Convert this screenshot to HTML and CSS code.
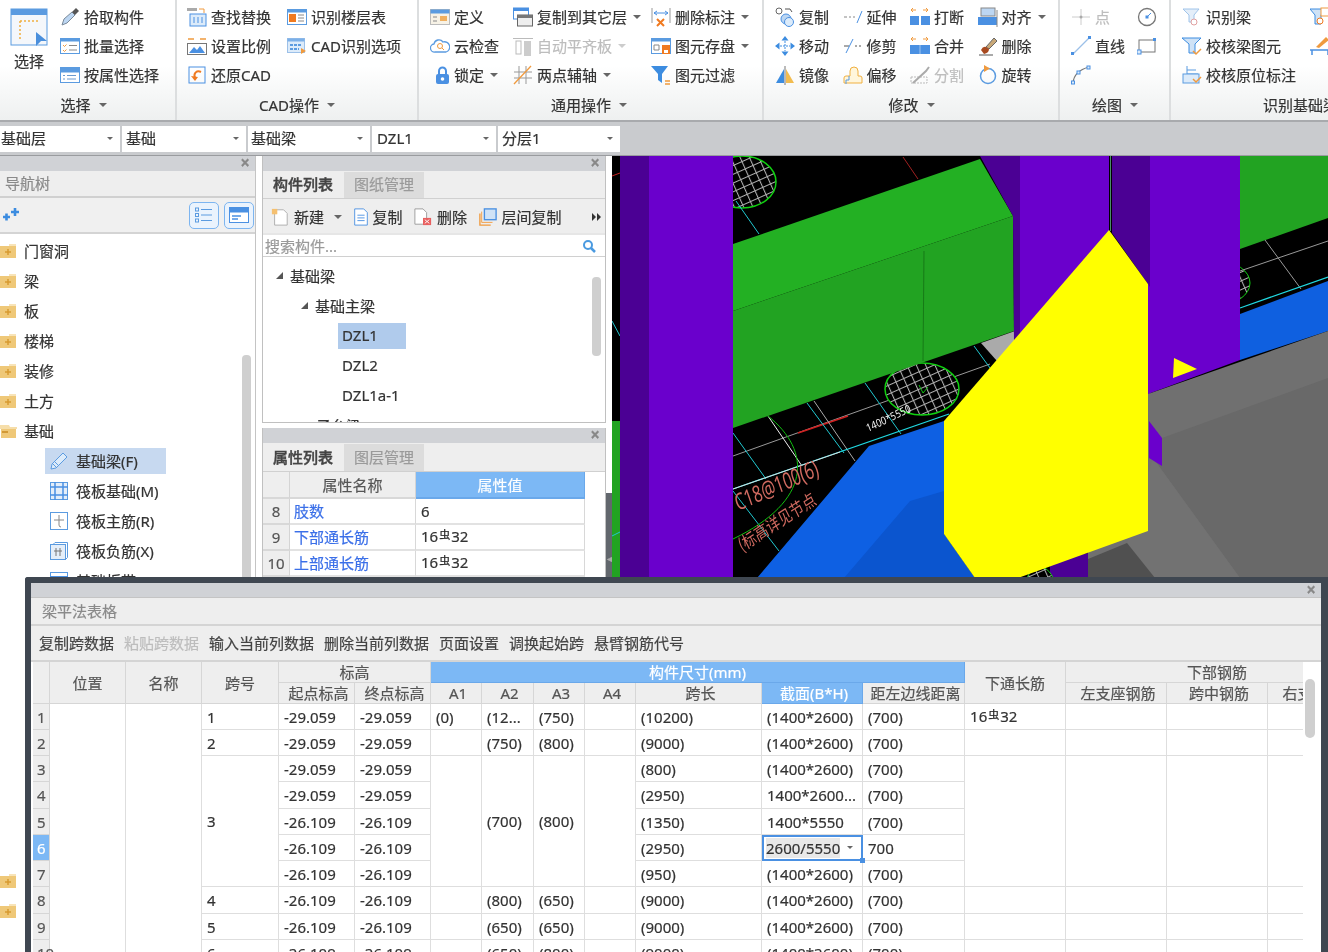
FILE: index.html
```html
<!DOCTYPE html>
<html lang="zh-CN">
<head>
<meta charset="utf-8">
<title>梁平法表格</title>
<link rel="stylesheet" href="styles.css">
</head>
<body>
<div class="app">
  <header class="ribbon">
    <section class="grp g1">
      <div class="grp-body">
        <div class="big">
          <svg width="38" height="38" viewBox="0 0 38 38"><rect x="1" y="1" width="36" height="36" fill="#f4f7fb" stroke="#5b9be0"/><rect x="1" y="1" width="36" height="6" fill="#5b9be0"/><path d="M10 13H30M10 13V33" stroke="#f0b040" stroke-width="1.5" stroke-dasharray="2 2" fill="none"/><path d="M26 24L37 33L31 33L26 38Z" fill="#4a8fdc"/></svg>
          <span>选择</span>
        </div>
        <div class="col">
          <div class="it"><svg class="ico" viewBox="0 0 20 20"><path d="M2 18L4 12L12 5L15 8L7 16Z" fill="#bcd6f2" stroke="#7a8a9a"/><path d="M12 5L16 1L19 4L15 8Z" fill="#555"/></svg>拾取构件</div>
          <div class="it"><svg class="ico" viewBox="0 0 20 20"><rect x=".5" y="2.500" width="19" height="15" fill="#fff" stroke="#5b9be0"/><rect x=".5" y="2.500" width="19" height="3" fill="#5b9be0"/><path d="M3 9l1.500 1.500 2-2M3 14l1.500 1.500 2-2" stroke="#f09a3e" fill="none"/><path d="M9 9.500h8M9 14h8" stroke="#888"/></svg>批量选择</div>
          <div class="it"><svg class="ico" viewBox="0 0 20 20"><rect x=".5" y="2.500" width="19" height="15" fill="#fff" stroke="#5b9be0"/><rect x=".5" y="2.500" width="19" height="5" fill="#5b9be0"/><path d="M3 10.500h2M3 14h2M7 10.500h9M7 14h9" stroke="#6a9ad0"/></svg>按属性选择</div>
        </div>
      </div>
      <div class="grp-label">选择<i class="caret"></i></div>
    </section>

    <section class="grp g2">
      <div class="grp-body">
        <div class="col">
          <div class="it"><svg class="ico" viewBox="0 0 20 20"><rect x="0" y="1" width="10" height="3" fill="#aaa"/><path d="M12 2h5v4" stroke="#f09a3e" fill="none"/><rect x="3" y="7" width="16" height="12" fill="#dcebfa" stroke="#4a90e2"/><path d="M7 10v6M11 10v6M15 10v6" stroke="#4a90e2"/></svg>查找替换</div>
          <div class="it"><svg class="ico" viewBox="0 0 20 20"><path d="M1 3h6M13 3h6" stroke="#f09a3e" stroke-width="1.500"/><rect x=".5" y="7.500" width="19" height="11" fill="#fff" stroke="#777"/><path d="M2 17l5-6 3 3 3-4 5 7Z" fill="#4a90e2"/></svg>设置比例</div>
          <div class="it"><svg class="ico" viewBox="0 0 20 20"><rect x="2" y="2" width="16" height="16" fill="none" stroke="#4a90e2"/><path d="M14 7C10 5 6 8 8 13" stroke="#f07a20" stroke-width="2" fill="none"/><path d="M4 11l4 5 3-4Z" fill="#f07a20"/></svg>还原CAD</div>
        </div>
        <div class="col">
          <div class="it"><svg class="ico" viewBox="0 0 20 20"><rect x=".5" y="2.500" width="19" height="15" fill="#fff" stroke="#5b9be0"/><rect x=".5" y="2.500" width="19" height="3" fill="#5b9be0"/><rect x="2" y="7" width="7" height="8" fill="#f07a20"/><path d="M11 8h6M11 11h6M11 14h6" stroke="#888"/></svg>识别楼层表</div>
          <div class="it"><svg class="ico" viewBox="0 0 20 20"><rect x=".5" y="2.500" width="17" height="14" fill="#dcebfa" stroke="#9cc0e8"/><rect x=".5" y="2.500" width="17" height="3" fill="#7cb0e8"/><path d="M3 9h11M3 13h9" stroke="#5b9be0" stroke-width="2" stroke-dasharray="3 1"/><path d="M14 12l5 3-5 3Z" fill="#f09a3e"/></svg>CAD识别选项</div>
        </div>
      </div>
      <div class="grp-label">CAD操作<i class="caret"></i></div>
    </section>

    <section class="grp g3">
      <div class="grp-body">
        <div class="col">
          <div class="it"><svg class="ico" viewBox="0 0 20 20"><rect x=".5" y="2.500" width="19" height="15" fill="#f7f2e6" stroke="#bbb"/><rect x=".5" y="2.500" width="19" height="4" fill="#5b9be0"/><path d="M3 10h4M3 14h4" stroke="#888"/><rect x="10" y="9" width="7" height="5" fill="#f0b060"/></svg>定义</div>
          <div class="it"><svg class="ico" viewBox="0 0 20 20"><path d="M5 16a4 4 0 0 1-1-8 5 5 0 0 1 9-2 5 5 0 0 1 3 10Z" fill="#fff" stroke="#5b9be0" stroke-width="1.300"/><circle cx="10" cy="10" r="2.500" fill="none" stroke="#f09a3e"/><path d="M12 12l2 2" stroke="#f09a3e"/></svg>云检查</div>
          <div class="it ind5"><svg class="ico sm" viewBox="0 0 15 20"><path d="M4 9V6a3.500 3.500 0 0 1 7 0v3" fill="none" stroke="#4a90e2" stroke-width="2"/><rect x="1" y="9" width="13" height="10" rx="2" fill="#4a90e2"/><circle cx="7.500" cy="14" r="1.800" fill="#fff"/></svg>锁定<i class="caret"></i></div>
        </div>
        <div class="col">
          <div class="it"><svg class="ico" viewBox="0 0 20 20"><rect x=".5" y="1" width="15" height="11" fill="#fff" stroke="#4a90e2"/><rect x=".5" y="1" width="15" height="3" fill="#4a90e2"/><rect x="4.500" y="8" width="15" height="11" fill="#eee" stroke="#666"/><rect x="4.500" y="8" width="15" height="3" fill="#777"/></svg>复制到其它层<i class="caret"></i></div>
          <div class="it off"><svg class="ico" viewBox="0 0 20 20"><path d="M0 2.500h20" stroke="#bbb"/><rect x="3" y="5" width="5" height="13" fill="#fff" stroke="#bbb"/><rect x="11" y="5" width="7" height="15" fill="#ccc"/></svg>自动平齐板<i class="caret lt"></i></div>
          <div class="it"><svg class="ico" viewBox="0 0 20 20"><path d="M1 7h18M1 13h18M6 1v18M13 1v18" stroke="#999"/><path d="M1 19L18 1" stroke="#f09a3e" stroke-width="1.300"/></svg>两点辅轴<i class="caret"></i></div>
        </div>
        <div class="col">
          <div class="it"><svg class="ico" viewBox="0 0 20 20"><path d="M1 1v15M19 1v15" stroke="#999"/><path d="M3 6h14M3 6l3-2M3 6l3 2M17 6l-3-2M17 6l-3 2" stroke="#4a90e2" fill="none"/><path d="M6 12l7 7M13 12l-7 7" stroke="#f07a20" stroke-width="2"/></svg>删除标注<i class="caret"></i></div>
          <div class="it"><svg class="ico" viewBox="0 0 20 20"><rect x=".5" y="2.500" width="19" height="15" fill="#fff" stroke="#5b9be0"/><rect x=".5" y="2.500" width="19" height="3" fill="#5b9be0"/><path d="M3 9h5v5H3Z" fill="none" stroke="#888"/><rect x="11" y="9" width="8" height="9" fill="#f07a20"/><rect x="13" y="14" width="4" height="3" fill="#fff"/></svg>图元存盘<i class="caret"></i></div>
          <div class="it"><svg class="ico" viewBox="0 0 20 20"><path d="M0 1h17L11 9v9L7 15V9Z" fill="#3c8ce0"/><path d="M14 16h5M14 19h5" stroke="#f09a3e" stroke-width="1.500"/></svg>图元过滤</div>
        </div>
      </div>
      <div class="grp-label">通用操作<i class="caret"></i></div>
    </section>

    <section class="grp g4">
      <div class="grp-body">
        <div class="col">
          <div class="it"><svg class="ico" viewBox="0 0 20 20"><circle cx="4" cy="4" r="3" fill="#fff" stroke="#666"/><path d="M10 2h5l2 3" stroke="#555" fill="none"/><circle cx="11" cy="12" r="5" fill="#bcd6f2" stroke="#4a90e2"/><circle cx="14" cy="15" r="4.500" fill="#dcebfa" stroke="#4a90e2"/></svg>复制</div>
          <div class="it"><svg class="ico" viewBox="0 0 20 20"><path d="M10 0L6.500 4.500h7ZM10 20l-3.500-4.500h7ZM0 10l4.500-3.500v7ZM20 10l-4.500-3.500v7Z" fill="#3c8ce0"/><path d="M10 5v10M5 10h10" stroke="#3c8ce0" stroke-dasharray="2 1"/></svg>移动</div>
          <div class="it"><svg class="ico" viewBox="0 0 20 20"><path d="M9 4L1 18h8Z" fill="#3c8ce0"/><path d="M11 4l8 14h-8Z" fill="#f2bc50"/><path d="M10 1v19" stroke="#777"/></svg>镜像</div>
        </div>
        <div class="col">
          <div class="it"><svg class="ico" viewBox="0 0 20 20"><path d="M1 10h3M6 10h2M10 10h2" stroke="#888"/><path d="M14 16L19 4" stroke="#4a90e2"/></svg>延伸</div>
          <div class="it"><svg class="ico" viewBox="0 0 20 20"><path d="M1 10h5M12 10h2M16 10h2" stroke="#555"/><path d="M3 17L10 3" stroke="#4a90e2"/></svg>修剪</div>
          <div class="it"><svg class="ico" viewBox="0 0 20 20"><path d="M1 18V13q0-2 2-2h4V6q0-4 4-4t4 4v5h2q2 0 2 2v5Z" fill="#fff6dc" stroke="#f0b040"/><path d="M3 19V15h3v-4" stroke="#5b9be0" fill="none"/></svg>偏移</div>
        </div>
        <div class="col">
          <div class="it"><svg class="ico" viewBox="0 0 20 20"><path d="M1 3h5M3 1l-2 2 2 2M13 3h5M16 1l2 2-2 2" stroke="#f09a3e" fill="none"/><rect x="0" y="9" width="9" height="9" fill="#4a90e2"/><rect x="11" y="9" width="9" height="9" fill="#4a90e2"/></svg>打断</div>
          <div class="it"><svg class="ico" viewBox="0 0 20 20"><path d="M1 3h5M3 1l-2 2 2 2M13 3h5M16 1l2 2-2 2" stroke="#f09a3e" fill="none"/><rect x="0" y="9" width="20" height="9" fill="#4a90e2"/><path d="M10 9v9" stroke="#9cc4f0"/></svg>合并</div>
          <div class="it off"><svg class="ico" viewBox="0 0 20 20"><path d="M1 12h16v6H1Z" fill="none" stroke="#bbb" stroke-dasharray="2 1"/><path d="M3 18L16 6l3-4" stroke="#aaa" stroke-width="2" fill="none"/></svg>分割</div>
        </div>
        <div class="col">
          <div class="it"><svg class="ico" viewBox="0 0 20 20"><rect x="3" y="1" width="14" height="8" fill="#bcd6f2" stroke="#888"/><rect x="0" y="10" width="19" height="8" fill="#4a90e2"/><path d="M19 3v17" stroke="#888"/></svg>对齐<i class="caret"></i></div>
          <div class="it"><svg class="ico" viewBox="0 0 20 20"><path d="M8 11L16 2l3 3-8 8Z" fill="#c8a878" stroke="#666"/><path d="M3 14q2-4 5-3l3 2q0 4-5 5Z" fill="#a84a20"/><path d="M1 19h14" stroke="#555"/></svg>删除</div>
          <div class="it"><svg class="ico" viewBox="0 0 20 20"><circle cx="10" cy="11" r="7.500" fill="none" stroke="#5b9be0" stroke-width="1.500"/><path d="M6 0l6 3.500L6 7Z" fill="#f09a3e"/></svg>旋转</div>
        </div>
      </div>
      <div class="grp-label">修改<i class="caret"></i></div>
    </section>

    <section class="grp g5">
      <div class="grp-body">
        <div class="col">
          <div class="it off"><svg class="ico" viewBox="0 0 20 20"><path d="M1 10h18M10 2v16" stroke="#ccc"/><circle cx="10" cy="10" r="1.500" fill="#aaa"/></svg>点</div>
          <div class="it"><svg class="ico" viewBox="0 0 20 20"><path d="M2 18L18 2" stroke="#9cc0e8" stroke-width="1.300"/><rect x="0" y="16" width="3" height="3" fill="#4a90e2"/><rect x="17" y="0" width="3" height="3" fill="#4a90e2"/></svg>直线</div>
          <div class="it"><svg class="ico" viewBox="0 0 20 20"><path d="M2 18Q3 6 18 2" stroke="#777" fill="none" stroke-width="1.200"/><rect x=".5" y="16" width="3" height="3" fill="#dcebfa" stroke="#4a90e2"/><rect x="6" y="6" width="3" height="3" fill="#dcebfa" stroke="#4a90e2"/><rect x="16" y="1" width="3" height="3" fill="#dcebfa" stroke="#4a90e2"/></svg></div>
        </div>
        <div class="col">
          <div class="it"><svg class="ico" viewBox="0 0 20 20"><circle cx="10" cy="10" r="8.500" fill="none" stroke="#777" stroke-width="1.300"/><rect x="8.500" y="8.500" width="3" height="3" fill="#4a90e2"/><path d="M10 10l4-4" stroke="#4a90e2"/></svg></div>
          <div class="it"><svg class="ico" viewBox="0 0 20 20"><rect x="2" y="4" width="16" height="12" fill="none" stroke="#777"/><rect x="0" y="14" width="4" height="4" fill="#dcebfa" stroke="#4a90e2"/><rect x="16" y="2" width="3" height="3" fill="#4a90e2"/></svg></div>
        </div>
      </div>
      <div class="grp-label">绘图<i class="caret"></i></div>
    </section>

    <section class="grp g6">
      <div class="grp-body">
        <div class="col">
          <div class="it"><svg class="ico" viewBox="0 0 20 20"><path d="M1 2h16l-5 6v7H7V8Z" fill="#e4eef9" stroke="#a0c4ea"/><circle cx="12" cy="15" r="3" fill="#fff" stroke="#e0a0a0"/></svg>识别梁</div>
          <div class="it"><svg class="ico" viewBox="0 0 20 20"><path d="M0 2h19l-6 6v9H7V8Z" fill="#cfe2f6" stroke="#3c8ce0"/><path d="M11 15l3 3 5-5" stroke="#f09a3e" stroke-width="1.500" fill="none"/></svg>校核梁图元</div>
          <div class="it"><svg class="ico" viewBox="0 0 20 20"><path d="M5 1v8H16M5 5h9" stroke="#5b9be0" fill="none"/><rect x="1" y="9" width="16" height="9" fill="#dcebfa" stroke="#5b9be0"/><path d="M11 14l3 3 5-5" stroke="#f09a3e" stroke-width="1.500" fill="none"/></svg>校核原位标注</div>
        </div>
        <div class="col">
          <div class="it"><svg class="ico" viewBox="0 0 20 20"><path d="M0 2h15l-4 6v9H5V8Z" fill="#cfe2f6" stroke="#3c8ce0"/><rect x="11" y="1" width="8" height="8" fill="#fff" stroke="#f09a3e"/><circle cx="10" cy="14" r="3" fill="#fff" stroke="#f07a20"/></svg></div>
          <div class="it"><svg class="ico" viewBox="0 0 20 20"><path d="M6 11L16 1l3 3-10 8Z" fill="#f09a3e"/><path d="M0 14h20M2 14v5M18 14v5" stroke="#4a90e2" stroke-width="1.500"/></svg></div>
        </div>
      </div>
      <div class="grp-label">识别基础梁<i class="caret"></i></div>
    </section>
  </header>

  <div class="combos">
    <div class="combo">基础层<i class="caret sm"></i></div>
    <div class="combo">基础<i class="caret sm"></i></div>
    <div class="combo">基础梁<i class="caret sm"></i></div>
    <div class="combo">DZL1<i class="caret sm"></i></div>
    <div class="combo">分层1<i class="caret sm"></i></div>
  </div>

  <main class="main">
    <aside class="nav">
      <div class="band"><span class="x">×</span></div>
      <div class="nav-title">导航树</div>
      <div class="nav-tools">
        <svg class="spark" viewBox="0 0 16 14"><path d="M0 9h7M3.500 5.500v7M8 4h8M12 0v8" stroke="#3c8ce0" stroke-width="2.600"/></svg>
        <span class="nav-btn"><svg viewBox="0 0 18 16" width="18" height="16"><rect x=".5" y="1" width="3" height="3" fill="none" stroke="#5b9be0"/><rect x=".5" y="6.500" width="3" height="3" fill="none" stroke="#5b9be0"/><rect x=".5" y="12" width="3" height="3" fill="none" stroke="#5b9be0"/><path d="M6 2.500h11M6 8h11M6 13.500h11" stroke="#5b9be0"/></svg></span>
        <span class="nav-btn"><svg viewBox="0 0 20 16" width="20" height="16"><rect x=".5" y=".5" width="19" height="15" fill="#fff" stroke="#4a90e2"/><rect x=".5" y=".5" width="19" height="5" fill="#4a90e2"/><path d="M3 9h9M3 12h6" stroke="#4a90e2" stroke-width="1.500"/></svg></span>
      </div>
      <div class="nav-list">
        <div class="fold"><svg class="folder" viewBox="0 0 17 16"><path d="M0 3h9V1h7v14H0Z" fill="#efc878"/><path d="M9 1h7v2H9Z" fill="#f8e4b8"/><path d="M8 6v6M5 9h6" stroke="#d89a30" stroke-width="1.500"/></svg>门窗洞</div>
        <div class="fold"><svg class="folder" viewBox="0 0 17 16"><path d="M0 3h9V1h7v14H0Z" fill="#efc878"/><path d="M9 1h7v2H9Z" fill="#f8e4b8"/><path d="M8 6v6M5 9h6" stroke="#d89a30" stroke-width="1.500"/></svg>梁</div>
        <div class="fold"><svg class="folder" viewBox="0 0 17 16"><path d="M0 3h9V1h7v14H0Z" fill="#efc878"/><path d="M9 1h7v2H9Z" fill="#f8e4b8"/><path d="M8 6v6M5 9h6" stroke="#d89a30" stroke-width="1.500"/></svg>板</div>
        <div class="fold"><svg class="folder" viewBox="0 0 17 16"><path d="M0 3h9V1h7v14H0Z" fill="#efc878"/><path d="M9 1h7v2H9Z" fill="#f8e4b8"/><path d="M8 6v6M5 9h6" stroke="#d89a30" stroke-width="1.500"/></svg>楼梯</div>
        <div class="fold"><svg class="folder" viewBox="0 0 17 16"><path d="M0 3h9V1h7v14H0Z" fill="#efc878"/><path d="M9 1h7v2H9Z" fill="#f8e4b8"/><path d="M8 6v6M5 9h6" stroke="#d89a30" stroke-width="1.500"/></svg>装修</div>
        <div class="fold"><svg class="folder" viewBox="0 0 17 16"><path d="M0 3h9V1h7v14H0Z" fill="#efc878"/><path d="M9 1h7v2H9Z" fill="#f8e4b8"/><path d="M8 6v6M5 9h6" stroke="#d89a30" stroke-width="1.500"/></svg>土方</div>
        <div class="fold"><svg class="folder" viewBox="0 0 17 16"><path d="M1 5h15v10H1Z" fill="#efc878"/><path d="M0 2h9l1 2h7v2H0Z" fill="#f6deaa"/><path d="M2 9h6" stroke="#c98a20" stroke-width="1.500"/></svg>基础</div>
        <div class="leaf sel"><svg class="ico" viewBox="0 0 18 18"><path d="M1 17l1-5L13 1l4 4L6 16Z" fill="#dcebfa" stroke="#5b9be0"/><path d="M3 12l3 3M5 10l3 3" stroke="#5b9be0"/></svg>基础梁(F)</div>
        <div class="leaf"><svg class="ico" viewBox="0 0 18 18"><rect x=".5" y=".5" width="17" height="17" fill="#e4eef9" stroke="#5b9be0"/><path d="M0 5h18M0 13h18M5 0v18M13 0v18" stroke="#4a90e2" stroke-width="1.500"/></svg>筏板基础(M)</div>
        <div class="leaf"><svg class="ico" viewBox="0 0 18 18"><rect x=".5" y=".5" width="17" height="17" fill="#fff" stroke="#5b9be0"/><path d="M9 3v10q0 2 2 2M4 8h10" stroke="#888" fill="none"/></svg>筏板主筋(R)</div>
        <div class="leaf"><svg class="ico" viewBox="0 0 18 18"><rect x=".5" y="2.500" width="15" height="15" fill="#e4eef9" stroke="#5b9be0"/><path d="M3 2.500L5 .5h12.500v15L15.500 17.500" fill="none" stroke="#5b9be0"/><path d="M4 9h8M6 6v8M10 6v8" stroke="#777"/></svg>筏板负筋(X)</div>
        <div class="leaf"><svg class="ico" viewBox="0 0 18 18"><rect x=".5" y=".5" width="17" height="17" fill="#fff" stroke="#5b9be0"/><path d="M0 5h18" stroke="#4a90e2" stroke-width="2"/></svg>基础板带(W)</div>
        <div class="nav-gap"></div>
        <div class="fold"><svg class="folder" viewBox="0 0 17 16"><path d="M0 3h9V1h7v14H0Z" fill="#efc878"/><path d="M9 1h7v2H9Z" fill="#f8e4b8"/><path d="M8 6v6M5 9h6" stroke="#d89a30" stroke-width="1.500"/></svg></div>
        <div class="fold"><svg class="folder" viewBox="0 0 17 16"><path d="M0 3h9V1h7v14H0Z" fill="#efc878"/><path d="M9 1h7v2H9Z" fill="#f8e4b8"/><path d="M8 6v6M5 9h6" stroke="#d89a30" stroke-width="1.500"/></svg></div>
        <div class="nav-scroll"></div>
      </div>
    </aside>

    <div class="mid">
      <section class="panel p-comp">
        <div class="band"><span class="x">×</span></div>
        <div class="tabs"><span class="tab on">构件列表</span><span class="tab">图纸管理</span></div>
        <div class="tools">
          <span class="tool"><svg class="ico" viewBox="0 0 20 20"><path d="M4 2h10l4 4v13H4Z" fill="#fff" stroke="#aaa"/><rect x="1" y="1" width="6" height="6" fill="#f5c070"/></svg>新建<i class="caret"></i></span>
          <span class="tool"><svg class="ico sm2" viewBox="0 0 16 20"><path d="M1 1h10l4 4v14H1Z" fill="#fff" stroke="#4a90e2"/><path d="M4 8h8M4 11h8M4 14h8" stroke="#4a90e2"/></svg>复制</span>
          <span class="tool"><svg class="ico" viewBox="0 0 20 20"><path d="M1 1h9l4 4v13H1Z" fill="#fff" stroke="#999"/><rect x="10" y="11" width="9" height="8" fill="#e86060"/><path d="M12 13l5 4M17 13l-5 4" stroke="#fff"/></svg>删除</span>
          <span class="tool"><svg class="ico" viewBox="0 0 20 20"><path d="M1 6v13h12" fill="none" stroke="#f09a3e" stroke-width="1.500"/><path d="M3 4v12h12" fill="none" stroke="#f09a3e"/><rect x="6" y="1" width="13" height="12" fill="#cfe2f6" stroke="#4a90e2" stroke-width="1.500"/></svg>层间复制</span>
          <svg class="more" width="9" height="8" viewBox="0 0 9 8"><path d="M0 0l4 4-4 4ZM5 0l4 4-4 4Z" fill="#333"/></svg>
        </div>
        <div class="search"><span>搜索构件...</span><svg width="14" height="14" viewBox="0 0 14 14"><circle cx="6" cy="6" r="4" fill="none" stroke="#4a9ae0" stroke-width="2"/><path d="M9 9l4 4" stroke="#4a9ae0" stroke-width="2.500"/></svg></div>
        <div class="tree">
          <div class="node n1"><i class="tri"></i>基础梁</div>
          <div class="node n2"><i class="tri"></i>基础主梁</div>
          <div class="node n3 on">DZL1</div>
          <div class="node n3">DZL2</div>
          <div class="node n3">DZL1a-1</div>
          <div class="node n2b">子台梁</div>
          <div class="tree-scroll"></div>
        </div>
      </section>
      <section class="panel p-attr">
        <div class="band"><span class="x">×</span></div>
        <div class="tabs"><span class="tab on">属性列表</span><span class="tab">图层管理</span></div>
        <table class="attr">
          <colgroup><col class="a0"><col class="a1"><col class="a2"></colgroup>
          <thead><tr><th></th><th>属性名称</th><th class="act">属性值</th></tr></thead>
          <tbody>
            <tr><th>8</th><td class="lnk">肢数</td><td>6</td></tr>
            <tr><th>9</th><td class="lnk">下部通长筋</td><td>16<span class="bar">虫</span>32</td></tr>
            <tr><th>10</th><td class="lnk">上部通长筋</td><td>16<span class="bar">虫</span>32</td></tr>
          </tbody>
        </table>
      </section>
    </div>

    <div class="split"><div class="grip">◂</div></div>

    <div class="canvas">
      <svg class="scene" viewBox="612 155 716 422" width="716" height="422">
        <defs>
          <pattern id="hatch" width="8.500" height="8" patternUnits="userSpaceOnUse" patternTransform="rotate(-24)">
            <rect width="8.500" height="8" fill="#000"/>
            <path d="M0 .5H8.500M.5 0V8" stroke="#b0b0b0" stroke-width="1.100"/>
          </pattern>
        </defs>
        <rect x="612" y="155" width="716" height="422" fill="#000"/>
        <path d="M612 175L620 172" stroke="#c82020"/>
        <path d="M612 320L620 335" stroke="#20c8d0"/>
        <path d="M612 420H620V577H612Z" fill="#22a322"/>
        <path d="M612 535L620 531" stroke="#20c8d0"/>
        <ellipse cx="742" cy="181" rx="34" ry="26" fill="url(#hatch)" stroke="#10d010" stroke-width="1.500"/>
        <path d="M736 200L759 233" stroke="#20c8d0"/>
        <path d="M903 156L918 178" stroke="#a02020"/>
        <path d="M733 455L990 363" stroke="#999"/>
        <path d="M798 432L848 415" stroke="#d02020" stroke-width="1.500"/>
        <path d="M814 400L855 460" stroke="#aaa"/>
        <path d="M768 415L802 465" stroke="#eee"/>
        <path d="M807 402L844 452M733 432L766 478M865 382L901 433M974 345L990 367M733 490L779 550" stroke="#20c8d0"/>
        <path d="M733 488L949 413" stroke="#20d8e0" stroke-width="1.300"/>
        <path d="M733 488L840 451" stroke="#ddd" stroke-width="1"/>
        <path d="M768 415C812 450 812 500 733 538" stroke="#10c010" fill="none"/>
        <ellipse cx="922" cy="388" rx="37" ry="26" fill="url(#hatch)" stroke="#10d010" stroke-width="1.500"/>
        <path d="M919 384L923 392L928 386" stroke="#10c010" fill="none"/>
        <text class="red" transform="matrix(.82 -.36 .42 1.200 738 510)">C18@100(6)</text>
        <text class="red2" transform="matrix(.85 -.55 .55 1.100 742 551)">(标高详见节点</text>
        <text class="wht" transform="matrix(.85 -.4 .4 1 868 431)">1400*5550</text>
        <path d="M733 243L980 158L1013 215L733 310Z" fill="#23b023"/>
        <path d="M733 310L1013 215L1014 330L733 427Z" fill="#22a322"/>
        <path d="M924 250L923 360" stroke="#177a17"/>
        <path d="M981 342L1015 330L1020 336L997 360Z" fill="#aaa"/>
        <path d="M620 155H649V577H620Z" fill="#4b0094"/>
        <path d="M649 155H733V577H649Z" fill="#6a00cc"/>
        <ellipse cx="1218" cy="282" rx="32" ry="22" fill="url(#hatch)" stroke="#10d010"/>
        <path d="M980 155H1020V340H1014L1013 215Z" fill="#4b0094"/>
        <path d="M1020 155H1109V232L1020 336Z" fill="#6a00cc"/>
        <path d="M1110.500 155V230" stroke="#4a8a6a"/>
        <path d="M1112 155H1150V393H1148V283L1112 232Z" fill="#4b0094"/>
        <path d="M1150 155H1240V359L1148 393V283L1150 286Z" fill="#6a00cc"/>
        <path d="M1240 155H1328V217L1240 248Z" fill="#22a322"/>
        <path d="M1240 270L1328 240M1265 239L1301 288" stroke="#999"/>
        <path d="M1240 307L1328 276" stroke="#20d8e0" stroke-width="1.300"/>
        <path d="M1240 313L1328 280V330L1240 359Z" fill="#0f60e0"/>
        <path d="M1148 393L1328 330V577H1088V520L1148 530Z" fill="#707070"/>
        <path d="M1162 437L1328 377V577H1240L1153 457Z" fill="#696969"/>
        <path d="M1153 457L1240 577H1155L1127 542Z" fill="#727272"/>
        <path d="M1088 558L1127 542L1155 577H1088Z" fill="#505050"/>
        <path d="M1149 420L1162 437V465L1149 457Z" fill="#6a00cc"/>
        <path d="M1050 560L1088 552V577H1050Z" fill="#4b0094"/>
        <ellipse cx="1040" cy="592" rx="16" ry="26" fill="url(#hatch)" stroke="#10d010"/>
        <path d="M869 445L944 420V533L975 577H757Z" fill="#0e60e3"/>
        <path d="M910 500L944 490V533L975 577H844Z" fill="#0b55cf"/>
        <path d="M1109 229L1148 283V530L1018 577H975L944 533V420Z" fill="#ff0"/>
        <path d="M1174 357L1197 368L1173 377Z" fill="#ff0"/>
      </svg>
    </div>
  </main>

  <section class="dialog">
    <div class="band dlg-band"><span class="x">×</span></div>
    <div class="dlg-title">梁平法表格</div>
    <div class="dlg-tools">
      <span>复制跨数据</span><span class="off">粘贴跨数据</span><span>输入当前列数据</span><span>删除当前列数据</span><span>页面设置</span><span>调换起始跨</span><span>悬臂钢筋代号</span>
    </div>
    <div class="gridwrap">
      <div class="gridclip">
        <table class="grid">
          <colgroup>
            <col class="c17"><col class="c76"><col class="c76"><col class="c77"><col class="c76"><col class="c76">
            <col class="c51"><col class="c52"><col class="c51"><col class="c51"><col class="c126"><col class="c101"><col class="c102">
            <col class="c101"><col class="c101"><col class="c101"><col class="c101">
          </colgroup>
          <thead>
            <tr>
              <th rowspan="2"></th><th rowspan="2">位置</th><th rowspan="2">名称</th><th rowspan="2">跨号</th>
              <th colspan="2">标高</th><th colspan="7" class="act">构件尺寸(mm)</th>
              <th rowspan="2">下通长筋</th><th colspan="3">下部钢筋</th>
            </tr>
            <tr class="sub">
              <th>起点标高</th><th>终点标高</th><th>A1</th><th>A2</th><th>A3</th><th>A4</th><th>跨长</th><th class="act">截面(B*H)</th><th>距左边线距离</th>
              <th>左支座钢筋</th><th>跨中钢筋</th><th>右支座钢筋</th>
            </tr>
          </thead>
          <tbody>
            <tr class="h26"><th>1</th><td rowspan="10"></td><td rowspan="10"></td><td>1</td><td>-29.059</td><td>-29.059</td><td>(0)</td><td>(12...</td><td>(750)</td><td></td><td>(10200)</td><td>(1400*2600)</td><td>(700)</td><td>16<span class="bar">虫</span>32</td><td></td><td></td><td></td></tr>
            <tr class="h26"><th>2</th><td>2</td><td>-29.059</td><td>-29.059</td><td></td><td>(750)</td><td>(800)</td><td></td><td>(9000)</td><td>(1400*2600)</td><td>(700)</td><td></td><td></td><td></td><td></td></tr>
            <tr class="h26"><th>3</th><td rowspan="5">3</td><td>-29.059</td><td>-29.059</td><td rowspan="5"></td><td rowspan="5">(700)</td><td rowspan="5">(800)</td><td rowspan="5"></td><td>(800)</td><td>(1400*2600)</td><td>(700)</td><td rowspan="5"></td><td rowspan="5"></td><td rowspan="5"></td><td rowspan="5"></td></tr>
            <tr class="h27"><th>4</th><td>-29.059</td><td>-29.059</td><td>(2950)</td><td>1400*2600...</td><td>(700)</td></tr>
            <tr class="h26"><th>5</th><td>-26.109</td><td>-26.109</td><td>(1350)</td><td>1400*5550</td><td>(700)</td></tr>
            <tr class="h26"><th class="act">6</th><td>-26.109</td><td>-26.109</td><td>(2950)</td><td class="edit"><span class="val">2600/5550</span><i class="caret sm"></i><i class="handle"></i></td><td class="plain">700</td></tr>
            <tr class="h26"><th>7</th><td>-26.109</td><td>-26.109</td><td>(950)</td><td>(1400*2600)</td><td>(700)</td></tr>
            <tr class="h27"><th>8</th><td>4</td><td>-26.109</td><td>-26.109</td><td></td><td>(800)</td><td>(650)</td><td></td><td>(9000)</td><td>(1400*2600)</td><td>(700)</td><td></td><td></td><td></td><td></td></tr>
            <tr class="h26"><th>9</th><td>5</td><td>-26.109</td><td>-26.109</td><td></td><td>(650)</td><td>(650)</td><td></td><td>(9000)</td><td>(1400*2600)</td><td>(700)</td><td></td><td></td><td></td><td></td></tr>
            <tr class="h26"><th>10</th><td>6</td><td>-26.109</td><td>-26.109</td><td></td><td>(650)</td><td>(800)</td><td></td><td>(9000)</td><td>(1400*2600)</td><td>(700)</td><td></td><td></td><td></td><td></td></tr>
          </tbody>
        </table>
      </div>
      <div class="grid-scroll"></div>
    </div>
  </section>
</div>
</body>
</html>
```

FILE: styles.css
```css
* { box-sizing: border-box; }
html, body { margin: 0; height: 100%; overflow: hidden; background: #fff; }
.app {
  position: relative;
  width: 1328px;
  height: 952px;
  overflow: hidden;
  font: 15px/20px "Noto Sans", "Noto Sans CJK SC", sans-serif;
  color: #333;
  -webkit-text-stroke: .2px;
  filter: blur(0.4px);
}

/* ribbon */
.ribbon {
  display: flex;
  height: 122px;
  overflow: hidden;
  background: linear-gradient(#fff 0, #fff 55%, #eef0f0 100%);
  border-bottom: 2px solid #a8aaad;
}
.grp {
  flex: none;
  height: 120px;
  display: flex;
  flex-direction: column;
  padding-top: 2px;
  border-right: 2px solid #dcdedf;
  padding-left: 11px;
}
.g1 { width: 177px; padding-left: 10px; }
.g2 { width: 242px; padding-left: 10px; }
.g3 { width: 345px; }
.g4 { width: 296px; }
.g5 { width: 111px; }
.g6 { width: 274px; border-right: 0; }
.grp-body { height: 88px; display: flex; }
.grp-label { height: 29px; display: flex; align-items: center; justify-content: center; gap: 8px; white-space: nowrap; padding-right: 10px; }
.g1 .grp-label { padding-right: 18px; }
.g3 .grp-label { padding-right: 14px; }
.col { flex: none; display: flex; flex-direction: column; }
.g1 .big { width: 38px; margin-right: 12px; display: flex; flex-direction: column; align-items: center; padding-top: 6px; }
.big svg { margin-bottom: 5px; }
.g2 .col:nth-child(1) { width: 100px; }
.g3 .col:nth-child(1) { width: 83px; }
.g3 .col:nth-child(2) { width: 138px; }
.g4 .col { width: 67.500px; }
.g5 .col { width: 66px; }
.g6 .col:nth-child(1) { width: 128px; }
.it { height: 29px; display: flex; align-items: center; gap: 4px; white-space: nowrap; }
.it.off { color: #bdbdbd; }
.ind5 { padding-left: 5px; }
.ico { flex: none; width: 20px; height: 20px; }
.ico.sm { width: 15px; }
.caret {
  display: inline-block;
  width: 0; height: 0;
  border-left: 4.500px solid transparent;
  border-right: 4.500px solid transparent;
  border-top: 4.500px solid #666;
  margin-left: 2px;
  flex: none;
}
.grp-label .caret { margin-left: 0; }
.caret.lt { border-top-color: #ccc; }
.caret.sm { border-left-width: 3.500px; border-right-width: 3.500px; border-top-width: 3.500px; }

/* combo bar */
.combos { height: 33px; display: flex; gap: 2px; padding: 4px 0 3px; background: #c9cbce; }
.combo { position: relative; width: 122px; height: 26px; background: #fff; padding: 2px 0 0 4px; line-height: 20px; }
.combo:nth-child(1) { width: 120px; padding-left: 1px; }
.combo:nth-child(2), .combo:nth-child(4) { width: 124px; }
.combo:nth-child(3) { padding-left: 3px; }
.combo:nth-child(4) { padding-left: 5px; }
.combo .caret { position: absolute; right: 7px; top: 11px; margin: 0; }

/* main row */
.main { display: flex; height: 797px; background: #fff; border-top: 1px solid #9a9c9f; }
.band { height: 15px; background: #d0d2d6; text-align: right; position: relative; }
.x { position: absolute; right: 5px; top: -3px; font-size: 17px; line-height: 20px; color: #888; font-weight: 700; }

.nav { flex: none; width: 256px; border-right: 1px solid #c4c4c4; }
.nav-title { height: 27px; background: #eeeeee; border-bottom: 2px solid #d0d0d0; color: #8a8a8a; padding: 2px 0 0 5px; }
.nav-tools { height: 36px; background: #f0f0f0; border-bottom: 2px solid #d4d4d4; display: flex; align-items: center; gap: 5px; padding-right: 1px; }
.spark { width: 16px; height: 14px; margin: 0 auto 0 3px; }
.nav-btn { width: 30px; height: 27px; border: 1.500px solid #7db5f0; border-radius: 5px; background: #eaf3fd; display: flex; align-items: center; justify-content: center; }
.nav-list { position: relative; padding-top: 2px; }
.fold { height: 30px; display: flex; align-items: center; gap: 7px; }
.folder { flex: none; width: 17px; height: 16px; }
.leaf { height: 30px; display: flex; align-items: center; gap: 8px; margin-left: 45px; width: 121px; padding-left: 5px; white-space: nowrap; border-top: 2px solid #fff; border-bottom: 2px solid #fff; }
.leaf .ico { width: 18px; height: 18px; }
.leaf.sel { background: #c7d9f0; }
.nav-gap { height: 270px; }
.nav-scroll { position: absolute; left: 242px; top: 121px; width: 9px; height: 300px; border-radius: 4px; background: #cfcfcf; }

.mid { flex: none; width: 344px; margin-left: 6px; display: flex; flex-direction: column; gap: 5px; }
.panel { border: 1px solid #c0c0c0; border-top: 0; background: #fff; overflow: hidden; }
.p-comp { height: 267px; position: relative; }
.p-attr { flex: 1; }
.tabs { height: 28px; background: #eeeeee; border-bottom: 1px solid #d0d0d0; display: flex; gap: 1px; padding-top: 1px; }
.p-attr .tabs { height: 29px; }
.tab { width: 80px; text-align: center; background: #dcdcdc; color: #9a9a9a; line-height: 24px; }
.p-attr .tab { line-height: 26px; }
.tab.on { background: #eeeeee; color: #444; font-weight: 500; -webkit-text-stroke: .4px #444; }
.tools { height: 34px; background: #eeeeee; display: flex; align-items: center; padding: 1px 0 0 7px; white-space: nowrap; }
.tool { display: flex; align-items: center; gap: 4px; margin-right: 10.500px; }
.tool .ico { width: 20px; height: 18px; }
.tool .caret { margin-left: 6px; }
.tool .ico.sm2 { width: 16px; }
.more { margin-left: auto; margin-right: 4px; }
.search { height: 24px; border-top: 2px solid #e6e6e6; border-bottom: 1px solid #d0d0d0; display: flex; align-items: center; justify-content: space-between; padding: 0 9px 0 2px; color: #9a9a9a; }
.tree { position: relative; height: 166px; overflow: hidden; }
.node { height: 30px; line-height: 30px; white-space: nowrap; display: flex; align-items: center; }
.n1 { padding-left: 28px; margin-top: 3.500px; }
.n2 { padding-left: 53px; }
.n3 { margin-left: 75px; width: 68px; padding: 0 0 2px 4px; line-height: 24px; border-top: 2px solid #fff; border-bottom: 2px solid #fff; }
.n3.on { background: #b0cbec; }
.n2b { padding-left: 53px; }
.tri { width: 0; height: 0; border-left: 7px solid transparent; border-bottom: 7px solid #555; margin: 0 7px 0 -15px; }
.tree-scroll { position: absolute; left: 329px; top: 20px; width: 9px; height: 79px; border-radius: 4px; background: #cfcfcf; }

.attr { border-spacing: 0; table-layout: fixed; width: 322px; font: inherit; }
.a0 { width: 27px; } .a1 { width: 126px; } .a2 { width: 169px; }
.attr th { background: #eeeeee; font-weight: 400; color: #555; border-right: 1px solid #d4d4d4; border-bottom: 2px solid #d8d8d8; height: 26px; padding: 0; text-align: center; }
.attr thead th { height: 27px; }
.attr th.act { background: #7cb8f5; color: #fff; border-color: #6aa8ea; }
.attr td { height: 26px; padding: 0 5px; border-right: 1px solid #d8d8d8; border-bottom: 2px solid #e2e2e2; white-space: nowrap; overflow: hidden; }
.attr .lnk { color: #3a6fe8; padding-left: 4px; }
.bar { font-size: 11px; position: relative; top: -3px; margin: 0 1px; color: #222; }

.split { flex: none; width: 6px; background: #fff; display: flex; flex-direction: column; padding-top: 337px; }
.grip { height: 90px; background: #62676d; color: #aaa; font-size: 10px; line-height: 30px; padding-top: 50px; text-align: center; }
.canvas { flex: none; width: 716px; height: 422px; background: #000; }
.scene { display: block; -webkit-text-stroke: 0; }
.red { font: 18px "Liberation Sans Narrow", "Noto Sans", sans-serif; fill: #d06a60; }
.red2 { font: 14px "Noto Sans CJK SC", sans-serif; fill: #d06a60; }
.wht { font: 10px "Noto Sans", sans-serif; fill: #eee; }

/* dialog */
.dialog {
  position: absolute;
  left: 25px; top: 577px; right: 0; bottom: 0;
  border: solid #3f4751;
  border-width: 6px 7px 0 6px;
  border-top-left-radius: 3px;
  background: #eeeeee;
  display: flex;
  flex-direction: column;
}
.dlg-band { flex: none; border-bottom: 1px solid #c4c4c4; }
.dlg-title { flex: none; height: 28px; border-bottom: 2px solid #d4d4d4; color: #8a8a8a; padding: 3px 0 0 11px; }
.dlg-tools { flex: none; height: 36px; display: flex; gap: 10px; align-items: center; padding-left: 8px; color: #444; border-bottom: 2px solid #d4d4d4; white-space: nowrap; }
.dlg-tools .off { color: #bdbdbd; }
.gridwrap { position: relative; flex: 1; background: #fff; padding-left: 2px; overflow: hidden; }
.gridclip { width: 1270px; height: 100%; overflow: hidden; }
.grid { border-spacing: 0; table-layout: fixed; width: 1336px; font: inherit; color: #333; }
.c17 { width: 17px; } .c76 { width: 76px; } .c77 { width: 77px; } .c51 { width: 51px; } .c52 { width: 52px; } .c126 { width: 126px; } .c101 { width: 101px; } .c102 { width: 102px; }
.grid thead th { height: 21px; padding: 0; line-height: 18px; font-weight: 400; background: #eeeeee; color: #555; text-align: center; border-right: 1.500px solid #d6d6d6; border-bottom: 1.500px solid #d6d6d6; white-space: nowrap; overflow: hidden; }
.grid thead .sub th { padding-left: 4px; }
.grid thead th.act { background: #7cb8f5; color: #fff; border-color: #6aa8ea; }
.grid tbody th { padding: 0 0 0 4px; font-weight: 400; background: #eeeeee; color: #555; text-align: left; border-right: 1.500px solid #d6d6d6; border-bottom: 1.500px solid #d6d6d6; }
.grid tbody th.act { background: #7cb8f5; color: #fff; }
.grid td { padding: 0 0 0 5px; border-right: 1.500px solid #dedede; border-bottom: 1.500px solid #dedede; white-space: nowrap; overflow: hidden; }
.h26 th, .h26 td { height: 26px; }
.h27 th, .h27 td { height: 27px; }
.grid td.edit { position: relative; overflow: visible; padding-left: 2px; border: 2px solid #4a90e2; }
.val { background: #e8e8e8; }
.edit .caret { position: absolute; right: 8px; top: 9px; margin: 0; }
.handle { position: absolute; right: -4px; bottom: -4px; width: 5px; height: 5px; background: #4a90e2; }
.grid-scroll { position: absolute; left: 1274px; top: 17px; width: 10px; height: 59px; border-radius: 5px; background: #cfcfcf; }
```
